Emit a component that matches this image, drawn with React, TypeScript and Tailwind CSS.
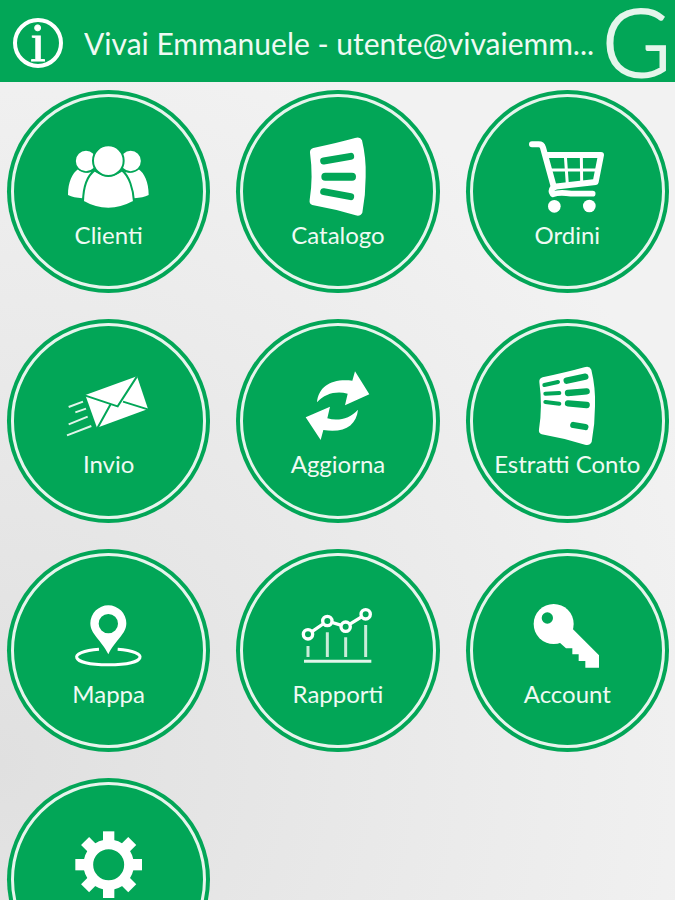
import type { ReactNode } from "react";

const GREEN = "#02a657";

const sheet =
  "M240 203Q239 192 250 189Q325 173 375 159Q391 154 396 166Q409 220 407 275Q407 330 397 383Q391 395 377 391Q315 372 247 360Q237 357 239 345Q250 275 240 203Z";

function ClientsIcon() {
  const side = (
    <>
      <path d="M203 330C203 292 216 264 233 253Q256 270 282 258L246 340Q220 338 203 330Z" />
      <circle cx="257" cy="228" r="33" stroke={GREEN} strokeWidth="5" />
    </>
  );
  return (
    <>
      {side}
      <g transform="translate(648 0) scale(-1 1)">{side}</g>
      <path
        d="M248 350C249 302 264 270 283 256Q324 285 365 256C386 272 399 312 401 350Q362 371 324 371Q284 371 248 350Z"
        stroke={GREEN}
        strokeWidth="6"
      />
      <circle cx="324" cy="227" r="46" stroke={GREEN} strokeWidth="6" />
    </>
  );
}

function CatalogIcon() {
  return (
    <>
      <path d={sheet} />
      <g stroke={GREEN} strokeLinecap="round">
        <path d="M281 228L362 214" strokeWidth="21" />
        <path d="M286 275H366" strokeWidth="24" />
        <path d="M281 320L362 335" strokeWidth="21" />
      </g>
    </>
  );
}

function CartIcon() {
  return (
    <>
      <g fill="none" stroke="#fff" strokeLinecap="round" strokeLinejoin="round">
        <path d="M218 178H238Q248 178 251 188L284 308" strokeWidth="18" />
        <path d="M262 210H425L409 291L284 305" strokeWidth="18" />
        <path d="M318 212L324 298M366 212L367 292M272 255H416" strokeWidth="9" />
        <path d="M283 305Q272 318 280 328Q300 320 335 326L400 326" strokeWidth="17" />
      </g>
      <circle cx="285" cy="364" r="19" />
      <circle cx="390" cy="363" r="19" />
    </>
  );
}

function SendIcon() {
  return (
    <>
      <path d="M255 242L410 186L443 284L290 340Z" />
      <path
        d="M253 243L352 276L410 186M368 262L445 286M330 271L291 342"
        fill="none"
        stroke={GREEN}
        strokeWidth="6"
      />
      <path
        d="M205 278L248 262M225 294L257 283M205 330L262 307M200 363L273 335"
        stroke="#e2f5ea"
        strokeWidth="6"
      />
    </>
  );
}

function RefreshIcon() {
  return (
    <>
      <path d="M261 264C266 216 304 192 367 199L375 171L418 240L345 273L353 238C320 229 285 237 261 264Z" />
      <path d="M384 286C379 334 342 357 280 347L272 377L227 309L300 277L292 312C325 321 360 313 384 286Z" />
    </>
  );
}

function StatementIcon() {
  return (
    <>
      <path d={sheet} />
      <g stroke={GREEN} strokeLinecap="round">
        <path d="M255 212L296 203M258 238L300 236M258 263L300 268" strokeWidth="12" />
        <path d="M322 199L378 187M326 236L382 231M326 267L382 272M342 332L378 338" strokeWidth="19" />
      </g>
    </>
  );
}

function MapIcon() {
  return (
    <>
      <path
        fillRule="evenodd"
        d="M324 181A54 54 0 0 1 378 235C378 268 345 285 324 328C303 285 270 268 270 235A54 54 0 0 1 324 181ZM324 207A29 29 0 1 0 324 265A29 29 0 1 0 324 207Z"
      />
      <path d="M296 313C200 320 205 359 324 359C443 359 448 320 352 313" fill="none" stroke="#fff" strokeWidth="9" />
    </>
  );
}

function ReportIcon() {
  return (
    <>
      <g fill={GREEN} stroke="#fff" strokeWidth="10">
        <path d="M234 268L292 228L347 245L407 208" fill="none" />
        <circle cx="234" cy="268" r="14" />
        <circle cx="292" cy="228" r="14" />
        <circle cx="347" cy="245" r="14" />
        <circle cx="407" cy="208" r="14" />
      </g>
      <path d="M234 303V336M292 262V336M347 277V336M407 240V336" stroke="#c9ecd9" strokeWidth="9" />
      <path d="M222 349H424" stroke="#e2f5ea" strokeWidth="9" />
    </>
  );
}

function KeyIcon() {
  return (
    <>
      <circle cx="283" cy="237" r="60" />
      <path d="M338 250L419 331V368H378V348H358V328H339V310H320L298 290Z" />
      <circle cx="264" cy="219" r="17" fill={GREEN} />
    </>
  );
}

function GearIcon() {
  return (
    <>
      <circle cx="323" cy="315" r="61" fill="none" stroke="#fff" strokeWidth="29" />
      {[0, 45, 90, 135, 180, 225, 270, 315].map((angle) => (
        <rect key={angle} x="306" y="215" width="34" height="38" transform={`rotate(${angle} 323 315)`} />
      ))}
    </>
  );
}

type Tile = { name: string; label?: string; viewBox: string; icon: ReactNode };

const tiles: Tile[] = [
  { name: "Clienti", label: "Clienti", viewBox: "182 135 288 252", icon: <ClientsIcon /> },
  { name: "Catalogo", label: "Catalogo", viewBox: "180 135 288 252", icon: <CatalogIcon /> },
  { name: "Ordini", label: "Ordini", viewBox: "179 135 288 252", icon: <CartIcon /> },
  { name: "Invio", label: "Invio", viewBox: "182 134 288 252", icon: <SendIcon /> },
  { name: "Aggiorna", label: "Aggiorna", viewBox: "180 134 288 252", icon: <RefreshIcon /> },
  { name: "Estratti Conto", label: "Estratti Conto", viewBox: "179 134 288 252", icon: <StatementIcon /> },
  { name: "Mappa", label: "Mappa", viewBox: "182 132 288 252", icon: <MapIcon /> },
  { name: "Rapporti", label: "Rapporti", viewBox: "180 132 288 252", icon: <ReportIcon /> },
  { name: "Account", label: "Account", viewBox: "179 132 288 252", icon: <KeyIcon /> },
  { name: "Impostazioni", viewBox: "180 175 288 252", icon: <GearIcon /> },
];

function TileButton({ tile }: { tile: Tile }) {
  return (
    <button type="button" aria-label={tile.name} className="aspect-square w-full rounded-full bg-[#02a657] p-1">
      <span className="flex size-full flex-col items-center gap-1.5 rounded-full border-3 border-[#e6f4ec] pt-[33px]">
        <svg viewBox={tile.viewBox} className="h-[84px] w-24 shrink-0 overflow-visible" fill="#fff" aria-hidden="true">
          {tile.icon}
        </svg>
        {tile.label && (
          <span className="text-2xl leading-[30px] whitespace-nowrap text-[#effaf3]">{tile.label}</span>
        )}
      </span>
    </button>
  );
}

export default function App() {
  return (
    <div className="flex h-screen flex-col bg-[radial-gradient(circle_at_0%_85%,#e0e0e0,#f2f2f2_760px)] font-[Lato,'Open_Sans',sans-serif]">
      <header className="flex h-[82px] shrink-0 items-center bg-[#02a657] pr-1 pl-[13px] text-[#effaf3]">
        <button
          type="button"
          aria-label="Informazioni"
          className="mt-1 flex size-[50px] shrink-0 items-center justify-center rounded-full border-4 border-white font-['Liberation_Serif',serif] text-[54px] leading-10 text-white [-webkit-text-stroke:1px]"
        >
          i
        </button>
        <h1 className="mt-1 ml-[21px] min-w-0 flex-1 overflow-hidden text-[30px] leading-10 whitespace-nowrap">
          Vivai Emmanuele - utente@vivaiemm...
        </h1>
        <span className="shrink-0 text-[94px] leading-[80px] font-light text-[#e4f5eb] [-webkit-text-stroke:2px]">G</span>
      </header>
      <main className="min-h-0 flex-1 overflow-y-auto [scrollbar-width:none]">
        <nav aria-label="Menu" className="grid grid-cols-3 gap-[26px] pt-2 pr-1.5 pb-6 pl-[7px]">
          {tiles.map((tile) => (
            <TileButton key={tile.name} tile={tile} />
          ))}
        </nav>
      </main>
    </div>
  );
}
